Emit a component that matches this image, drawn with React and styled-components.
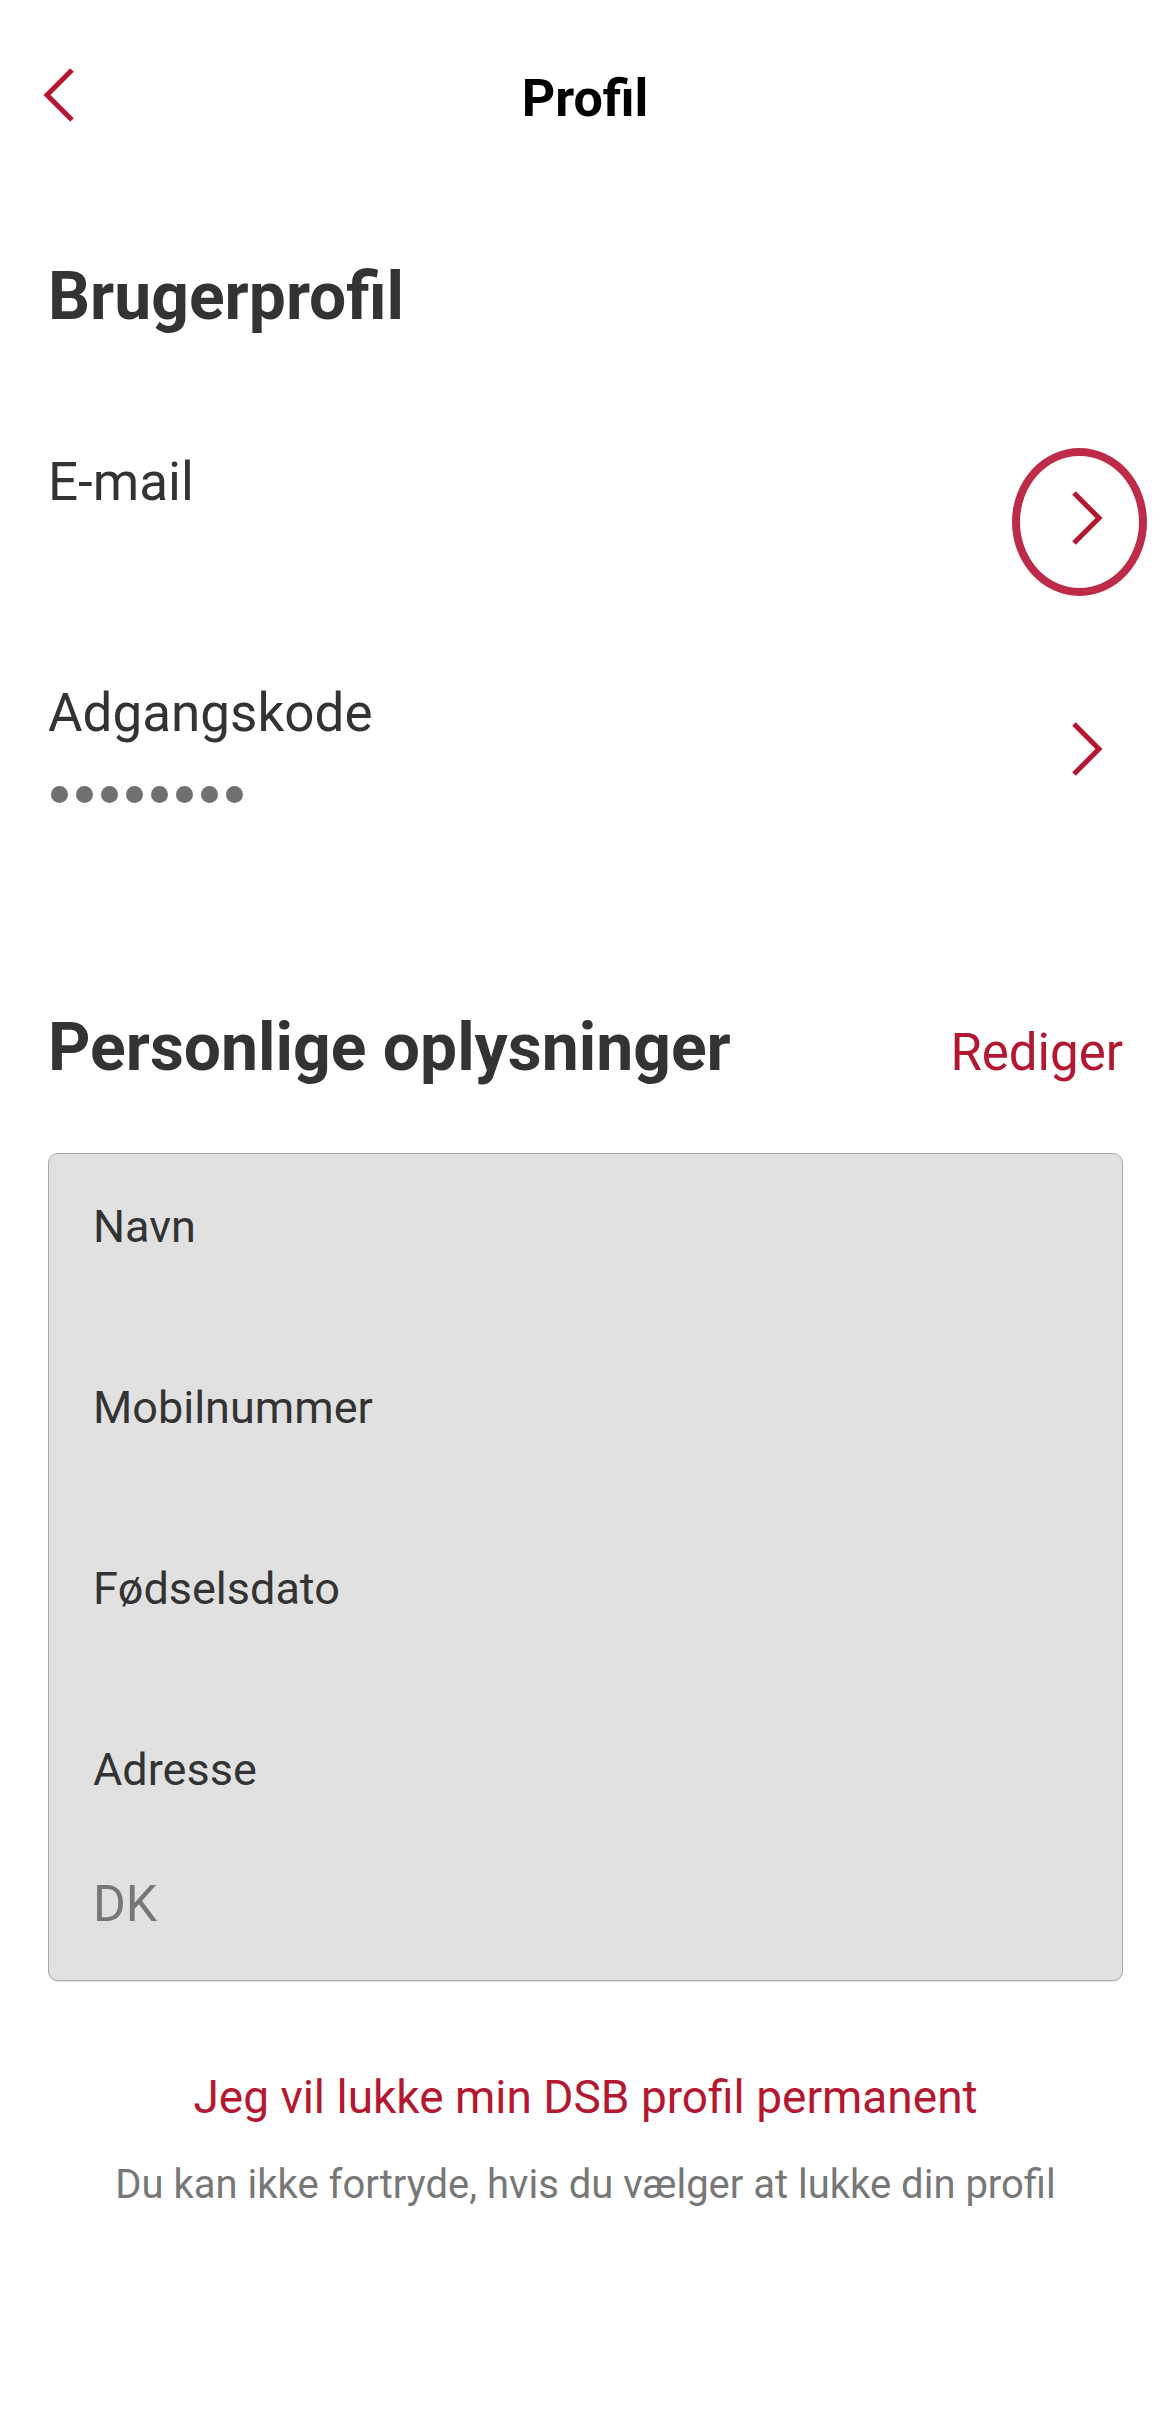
import React from "react";
import styled, { createGlobalStyle } from "styled-components";

const RED = "#b41730";

const GlobalStyle = createGlobalStyle`
  html, body {
    margin: 0;
    padding: 0;
    background: #fff;
  }
  body {
    font-family: Roboto, "Liberation Sans", Arial, sans-serif;
    color: #333;
  }
  * {
    box-sizing: border-box;
  }
`;

const Screen = styled.div`
  width: 1170px;
  min-height: 2424px;
  background: #fff;
`;

const Header = styled.header`
  height: 198px;
  display: grid;
  grid-template-columns: 1fr auto 1fr;
  align-items: center;
  padding: 0 43px;
`;

const BackButton = styled.button`
  justify-self: start;
  display: flex;
  padding: 0 0 9px;
  border: 0;
  background: none;
  cursor: pointer;
`;

const Title = styled.h1`
  margin: 0;
  font-size: 52px;
  line-height: 62px;
  font-weight: 700;
  color: #000;
`;

const Content = styled.main`
  padding: 59px 47px 0 48px;
`;

const SectionTitle = styled.h2`
  margin: 0;
  font-size: 66px;
  line-height: 80px;
  font-weight: 700;
  color: #333;
`;

const List = styled.div`
  margin-top: 113px;
  display: flex;
  flex-direction: column;
  gap: 96px;
`;

const Row = styled.div`
  height: 135px;
  display: flex;
  align-items: center;
  justify-content: space-between;
`;

const RowText = styled.div`
  display: flex;
  flex-direction: column;
  padding-bottom: 13px;
`;

const RowLabel = styled.div`
  font-size: 53px;
  line-height: 64px;
  color: #333;
`;

const RowValue = styled.div`
  margin-top: 41px;
  height: 18px;
  display: flex;
  align-items: center;
  gap: 8px;
  padding-left: 3px;
`;

const Dot = styled.span`
  width: 17px;
  height: 17px;
  border-radius: 50%;
  background: #707070;
`;

const ChevronBox = styled.div`
  position: relative;
  width: 72px;
  height: 72px;
  display: flex;
  align-items: center;
  justify-content: center;
`;

const FocusRing = styled.span`
  position: absolute;
  left: -39px;
  top: -34px;
  width: 135px;
  height: 148px;
  border: 8px solid #be2b48;
  border-radius: 50%;
`;

const SectionHeader = styled.div`
  margin-top: 192px;
  display: flex;
  align-items: baseline;
  justify-content: space-between;
`;

const EditButton = styled.button`
  padding: 0;
  border: 0;
  background: none;
  font-family: inherit;
  font-size: 51px;
  line-height: 61px;
  color: ${RED};
  cursor: pointer;
`;

const Card = styled.div`
  margin-top: 65px;
  padding: 46px 46px 46px 44px;
  background: #e1e1e1;
  border: 1.5px solid #a9a9a9;
  border-radius: 10px;
  box-shadow: 0 1px 1px rgba(0, 0, 0, 0.12);
`;

const Field = styled.div`
  display: flex;
  flex-direction: column;
`;

const FieldLabel = styled.div`
  font-size: 45px;
  line-height: 54px;
  color: #333;
`;

const FieldValue = styled.div`
  padding-top: 77px;
  min-height: 127px;
  font-size: 50px;
  line-height: 60px;
  color: #777;
`;

const Footer = styled.div`
  margin-top: 89px;
  display: flex;
  flex-direction: column;
  align-items: center;
  text-align: center;
`;

const CloseLink = styled.button`
  padding: 0;
  border: 0;
  background: none;
  font-family: inherit;
  font-size: 46px;
  line-height: 54px;
  color: ${RED};
  cursor: pointer;
`;

const Note = styled.p`
  margin: 37px 0 0;
  font-size: 40px;
  line-height: 48px;
  color: #777;
`;

const Chevron = ({ left }) => (
  <svg width="32" height="54" viewBox="0 0 32 54" fill="none">
    <polyline
      points={left ? "29,2 4,27 29,52" : "3,2 28,27 3,52"}
      stroke={RED}
      strokeWidth="5"
      strokeLinejoin="miter"
      strokeLinecap="butt"
    />
  </svg>
);

const fields = [
  { label: "Navn", value: "" },
  { label: "Mobilnummer", value: "" },
  { label: "Fødselsdato", value: "" },
  { label: "Adresse", value: "DK" },
];

export default function App() {
  return (
    <Screen>
      <GlobalStyle />
      <Header>
        <BackButton aria-label="Tilbage">
          <Chevron left />
        </BackButton>
        <Title>Profil</Title>
        <span />
      </Header>

      <Content>
        <SectionTitle>Brugerprofil</SectionTitle>

        <List>
          <Row>
            <RowText>
              <RowLabel>E-mail</RowLabel>
              <RowValue />
            </RowText>
            <ChevronBox>
              <FocusRing />
              <Chevron />
            </ChevronBox>
          </Row>
          <Row>
            <RowText>
              <RowLabel>Adgangskode</RowLabel>
              <RowValue>
                {Array.from({ length: 8 }).map((_, i) => (
                  <Dot key={i} />
                ))}
              </RowValue>
            </RowText>
            <ChevronBox>
              <Chevron />
            </ChevronBox>
          </Row>
        </List>

        <SectionHeader>
          <SectionTitle>Personlige oplysninger</SectionTitle>
          <EditButton>Rediger</EditButton>
        </SectionHeader>

        <Card>
          {fields.map((f) => (
            <Field key={f.label}>
              <FieldLabel>{f.label}</FieldLabel>
              <FieldValue>{f.value}</FieldValue>
            </Field>
          ))}
        </Card>

        <Footer>
          <CloseLink>Jeg vil lukke min DSB profil permanent</CloseLink>
          <Note>Du kan ikke fortryde, hvis du vælger at lukke din profil</Note>
        </Footer>
      </Content>
    </Screen>
  );
}
